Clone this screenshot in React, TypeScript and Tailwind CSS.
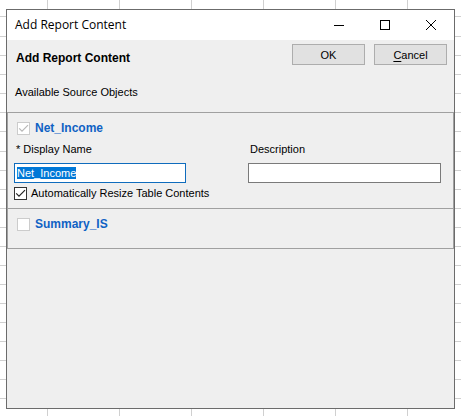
import { useEffect, useRef, useState } from 'react';
import { clsx } from 'clsx';

// Row heights of the worksheet behind the dialog, top to bottom
const SHEET_ROWS = ['h-[17px]', 'h-5', ...Array(5).fill('h-[19px]'), 'h-5', ...Array(80).fill('h-[19px]')];

type CheckboxProps = {
  id: string;
  checked: boolean;
  disabled?: boolean;
  onChange?: (checked: boolean) => void;
};

function Checkbox({ id, checked, disabled, onChange }: CheckboxProps) {
  return (
    <span className="relative flex size-[13px] shrink-0">
      <input
        id={id}
        type="checkbox"
        checked={checked}
        disabled={disabled}
        onChange={(e) => onChange?.(e.target.checked)}
        className={clsx(
          'size-[13px] appearance-none border bg-white',
          disabled ? 'border-[#cccccc]' : 'border-[#333333]'
        )}
      />
      {checked && (
        <svg
          viewBox="0 0 13 13"
          className={clsx(
            'pointer-events-none absolute inset-0 size-[13px]',
            disabled ? 'text-[#b8b8b8]' : 'text-[#222222]'
          )}
          fill="none"
          stroke="currentColor"
          strokeWidth="1.2"
        >
          <path d="M2.2 6.4 5 9.2 11 3.2" />
        </svg>
      )}
    </span>
  );
}

function Worksheet() {
  return (
    <div
      aria-hidden="true"
      className="absolute inset-0 overflow-hidden bg-[linear-gradient(to_right,#d0d0d0_1px,transparent_1px)] bg-size-[72px_100%] bg-position-[47px_0]"
    >
      {SHEET_ROWS.map((height, index) => (
        <div key={index} className={clsx('border-b border-[#d0d0d0]', height)} />
      ))}
    </div>
  );
}

function TitleBar() {
  return (
    <header className="flex h-[30px] items-center bg-white pl-2">
      <h1 className="flex-1 font-['Open_Sans','Noto_Sans',sans-serif] text-[12px] leading-4">
        Add Report Content
      </h1>
      <div className="flex h-full pb-px">
        <button type="button" aria-label="Minimize" className="flex w-[46px] items-center justify-center">
          <svg width="10" height="10" viewBox="0 0 10 10" shapeRendering="crispEdges">
            <path d="M0 5h10v1H0z" />
          </svg>
        </button>
        <button type="button" aria-label="Maximize" className="flex w-[46px] items-center justify-center">
          <svg width="10" height="10" viewBox="0 0 10 10" fill="none" stroke="#000">
            <rect x="0.5" y="0.5" width="9" height="9" />
          </svg>
        </button>
        <button type="button" aria-label="Close" className="flex w-[46px] items-center justify-center">
          <svg width="10" height="10" viewBox="0 0 10 10" fill="none" stroke="#000">
            <path d="M0 0 10 10M10 0 0 10" />
          </svg>
        </button>
      </div>
    </header>
  );
}

export default function App() {
  const [displayName, setDisplayName] = useState('Net_Income');
  const [description, setDescription] = useState('');
  const [autoResize, setAutoResize] = useState(true);
  const nameRef = useRef<HTMLInputElement>(null);

  useEffect(() => {
    nameRef.current?.focus();
    nameRef.current?.select();
  }, []);

  return (
    <div className="relative flex min-h-screen bg-white px-[6px] pt-[9px] pb-[7px] font-['Liberation_Sans',Arial,sans-serif] text-[11px] leading-4 text-black">
      <Worksheet />

      <main className="relative flex flex-1 flex-col border border-[#6b6b6b] bg-[#efefef]">
        <TitleBar />

        <div className="flex items-start gap-[9px] pt-1 pr-[7px] pl-[9px]">
          <h2 className="flex-1 pt-[6px] text-[12px] font-bold">Add Report Content</h2>
          <button type="button" className="h-[21px] w-[73px] border border-[#adadad] bg-[#e1e1e1]">
            OK
          </button>
          <button type="button" className="h-[21px] w-[73px] border border-[#adadad] bg-[#e1e1e1]">
            <span className="underline underline-offset-2">C</span>ancel
          </button>
        </div>

        <p className="pt-[18px] pb-3 pl-2">Available Source Objects</p>

        <div className="border border-[#a0a0a0]">
          <section className="border-b border-[#a0a0a0] pt-[7px] pr-3 pb-[7px] pl-[6px]">
            <div className="flex items-center gap-[5px] pl-[3px]">
              <Checkbox id="net-income" checked disabled />
              <label htmlFor="net-income" className="text-[12px] font-bold text-[#0f62c4]">
                Net_Income
              </label>
            </div>

            <div className="grid grid-cols-[234fr_193fr] pt-[5px]">
              <div className="flex flex-col gap-[6px] pr-[62px]">
                <label htmlFor="display-name" className="pl-[2px]">
                  * Display Name
                </label>
                <input
                  id="display-name"
                  ref={nameRef}
                  type="text"
                  value={displayName}
                  onChange={(e) => setDisplayName(e.target.value)}
                  className="h-5 w-full border border-[#0f6cbd] bg-white px-[2px] outline-none selection:bg-[#0078d7] selection:text-white"
                />
              </div>
              <div className="flex flex-col gap-[6px]">
                <label htmlFor="description" className="pl-[2px]">
                  Description
                </label>
                <input
                  id="description"
                  type="text"
                  value={description}
                  onChange={(e) => setDescription(e.target.value)}
                  className="h-5 w-full border border-[#7a7a7a] bg-white px-[2px] outline-none"
                />
              </div>
            </div>

            <div className="flex items-center gap-1 pt-[2px]">
              <Checkbox id="auto-resize" checked={autoResize} onChange={setAutoResize} />
              <label htmlFor="auto-resize">Automatically Resize Table Contents</label>
            </div>
          </section>

          <section className="flex items-center gap-[5px] pt-[7px] pb-4 pl-[9px]">
            <Checkbox id="summary-is" checked={false} disabled />
            <label htmlFor="summary-is" className="text-[12px] font-bold text-[#0f62c4]">
              Summary_IS
            </label>
          </section>
        </div>
      </main>
    </div>
  );
}
